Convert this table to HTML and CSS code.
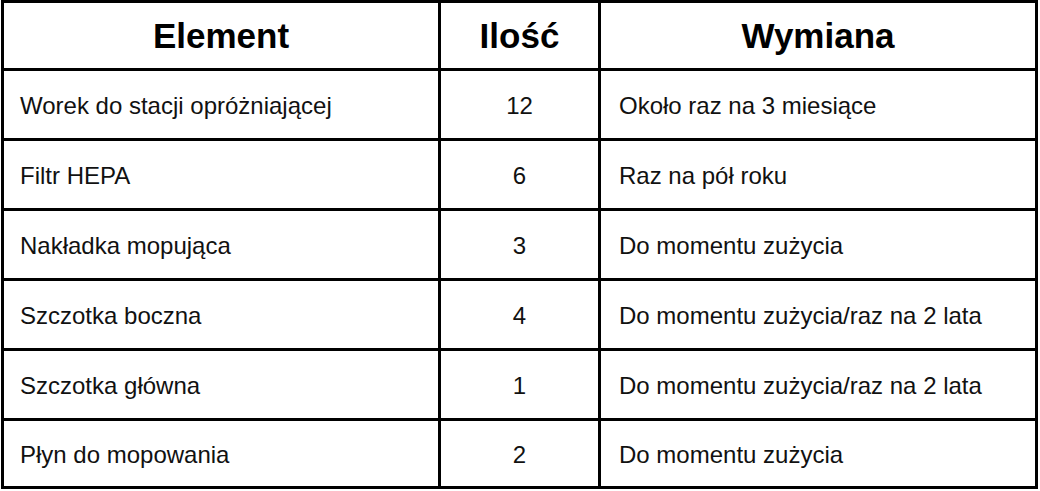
FILE: index.html
```html
<!DOCTYPE html>
<html lang="pl">
<head>
<meta charset="utf-8">
<title>Tabela</title>
<link rel="stylesheet" href="styles.css">
</head>
<body>
<div class="wrap">
<table class="parts">
  <colgroup>
    <col class="c1"><col class="c2"><col class="c3">
  </colgroup>
  <thead>
    <tr><th>Element</th><th>Ilość</th><th>Wymiana</th></tr>
  </thead>
  <tbody>
    <tr><td>Worek do stacji opróżniającej</td><td class="num">12</td><td class="note">Około raz na 3 miesiące</td></tr>
    <tr><td>Filtr HEPA</td><td class="num">6</td><td class="note">Raz na pół roku</td></tr>
    <tr><td>Nakładka mopująca</td><td class="num">3</td><td class="note">Do momentu zużycia</td></tr>
    <tr><td>Szczotka boczna</td><td class="num">4</td><td class="note">Do momentu zużycia/raz na 2 lata</td></tr>
    <tr><td>Szczotka główna</td><td class="num">1</td><td class="note">Do momentu zużycia/raz na 2 lata</td></tr>
    <tr class="last"><td>Płyn do mopowania</td><td class="num">2</td><td class="note">Do momentu zużycia</td></tr>
  </tbody>
</table>
</div>
</body>
</html>
```
FILE: styles.css
```css
html, body {
  margin: 0;
  padding: 0;
  background: #fff;
}
.wrap {
  padding-left: 1px;
}
.parts {
  border-collapse: separate;
  border-spacing: 0;
  border-top: 3px solid #000;
  border-left: 3px solid #000;
  table-layout: fixed;
  width: 1037px;
  font-family: "Liberation Sans", Arial, sans-serif;
  color: #111;
}
.c1 { width: 437px; }
.c2 { width: 160px; }
.c3 { width: 437px; }
.parts th, .parts td {
  border-right: 3px solid #000;
  border-bottom: 3px solid #000;
  padding: 0;
  box-sizing: border-box;
  vertical-align: middle;
}
.parts th {
  height: 68px;
  font-size: 35px;
  font-weight: bold;
  text-align: center;
  color: #000;
}
.parts td {
  height: 70px;
  font-size: 24px;
  padding-left: 16px;
  padding-top: 2px;
}
.parts td.note {
  padding-left: 18px;
}
.parts td.num {
  text-align: center;
  padding-left: 0;
}
.parts tr.last td {
  height: 68px;
}
```
